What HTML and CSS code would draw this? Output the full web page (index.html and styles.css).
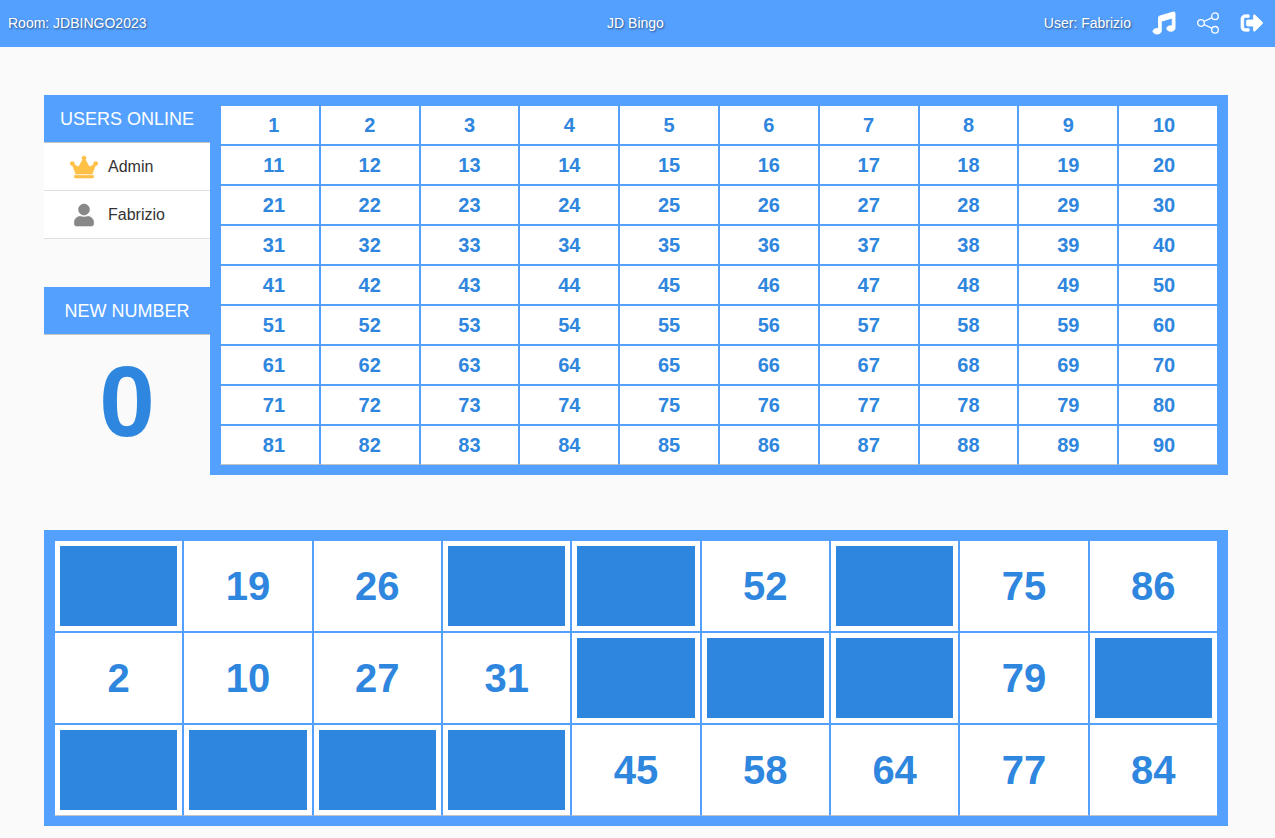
FILE: index.html
```html
<!DOCTYPE html>
<html lang="en">
<head>
<meta charset="utf-8">
<meta name="viewport" content="width=device-width, initial-scale=1">
<title>JD Bingo</title>
<link rel="stylesheet" href="styles.css">
</head>
<body>
<header class="topbar">
  <span class="topbar-room">Room: JDBINGO2023</span>
  <h1 class="topbar-title">JD Bingo</h1>
  <div class="topbar-actions">
    <span>User: Fabrizio</span>
    <button class="icon-button" type="button" aria-label="Music">
      <svg viewBox="0 0 512 512" fill="currentColor" stroke="currentColor" stroke-width="22" overflow="visible"><path d="M470.38 1.51L150.41 96A32 32 0 0 0 128 126.51v261.41A139 139 0 0 0 96 384c-53 0-96 28.66-96 64s43 64 96 64 96-28.66 96-64V214.32l256-75v184.61a138.4 138.4 0 0 0-32-3.93c-53 0-96 28.66-96 64s43 64 96 64 96-28.65 96-64V32a32 32 0 0 0-41.62-30.49z"/></svg>
    </button>
    <button class="icon-button" type="button" aria-label="Share">
      <svg viewBox="0 0 22 22" fill="none" stroke="currentColor" stroke-width="1.3"><circle cx="4" cy="11" r="3.3"/><circle cx="18" cy="4.2" r="3.3"/><circle cx="18" cy="17.800" r="3.3"/><path d="M7 9.500l8-3.900M7 12.500l8 3.900"/></svg>
    </button>
    <button class="icon-button" type="button" aria-label="Leave room">
      <svg viewBox="0 0 512 512" fill="currentColor" stroke="currentColor" stroke-width="16" overflow="visible"><path d="M497 273L329 441c-15 15-41 4.500-41-17v-96H152c-13.300 0-24-10.700-24-24v-96c0-13.300 10.700-24 24-24h136V88c0-21.400 25.900-32 41-17l168 168c9.300 9.400 9.300 24.600 0 34zM192 436v-40c0-6.600-5.400-12-12-12H96c-17.700 0-32-14.300-32-32V160c0-17.700 14.300-32 32-32h84c6.600 0 12-5.400 12-12V76c0-6.600-5.400-12-12-12H96c-53 0-96 43-96 96v192c0 53 43 96 96 96h84c6.600 0 12-5.400 12-12z"/></svg>
    </button>
  </div>
</header>
<main class="game">
  <div class="overview">
    <aside class="sidebar">
      <section>
        <h2 class="panel-title">USERS ONLINE</h2>
        <ul class="users">
          <li class="user">
            <svg class="user-icon user-icon-admin" viewBox="0 0 640 512" fill="currentColor" stroke="currentColor" stroke-width="14" overflow="visible"><path d="M528 448H112c-8.800 0-16 7.200-16 16v32c0 8.800 7.200 16 16 16h416c8.800 0 16-7.200 16-16v-32c0-8.800-7.200-16-16-16zm64-320c-26.500 0-48 21.500-48 48 0 7.100 1.600 13.700 4.400 19.800L476 239.200c-15.400 9.200-35.300 4-44.200-11.600L350.300 85C361 76.200 368 63 368 48c0-26.500-21.500-48-48-48s-48 21.500-48 48c0 15 7 28.200 17.700 37l-81.500 142.600c-8.900 15.600-28.900 20.800-44.200 11.600l-72.300-43.400c2.700-6 4.400-12.700 4.400-19.800 0-26.500-21.500-48-48-48S0 149.500 0 176s21.500 48 48 48c2.600 0 5.200-.4 7.700-.8L128 416h384l72.300-192.800c2.500.4 5.100.8 7.700.8 26.500 0 48-21.500 48-48s-21.500-48-48-48z"/></svg>
            <span>Admin</span>
          </li>
          <li class="user">
            <svg class="user-icon" viewBox="0 0 448 512" fill="currentColor" stroke="currentColor" stroke-width="14" overflow="visible"><path d="M224 256c70.700 0 128-57.300 128-128S294.700 0 224 0 96 57.300 96 128s57.300 128 128 128zm89.600 32h-16.700c-22.200 10.200-46.900 16-72.900 16s-50.600-5.800-72.900-16h-16.700C60.200 288 0 348.200 0 422.400V464c0 26.500 21.500 48 48 48h352c26.500 0 48-21.500 48-48v-41.600c0-74.200-60.200-134.400-134.400-134.400z"/></svg>
            <span>Fabrizio</span>
          </li>
        </ul>
      </section>
      <section>
        <h2 class="panel-title">NEW NUMBER</h2>
        <p class="drawn-number">0</p>
      </section>
    </aside>
    <div class="frame board-frame">
      <table class="grid board" aria-label="Board">
        <tbody>
          <tr><td>1</td><td>2</td><td>3</td><td>4</td><td>5</td><td>6</td><td>7</td><td>8</td><td>9</td><td>10</td></tr>
          <tr><td>11</td><td>12</td><td>13</td><td>14</td><td>15</td><td>16</td><td>17</td><td>18</td><td>19</td><td>20</td></tr>
          <tr><td>21</td><td>22</td><td>23</td><td>24</td><td>25</td><td>26</td><td>27</td><td>28</td><td>29</td><td>30</td></tr>
          <tr><td>31</td><td>32</td><td>33</td><td>34</td><td>35</td><td>36</td><td>37</td><td>38</td><td>39</td><td>40</td></tr>
          <tr><td>41</td><td>42</td><td>43</td><td>44</td><td>45</td><td>46</td><td>47</td><td>48</td><td>49</td><td>50</td></tr>
          <tr><td>51</td><td>52</td><td>53</td><td>54</td><td>55</td><td>56</td><td>57</td><td>58</td><td>59</td><td>60</td></tr>
          <tr><td>61</td><td>62</td><td>63</td><td>64</td><td>65</td><td>66</td><td>67</td><td>68</td><td>69</td><td>70</td></tr>
          <tr><td>71</td><td>72</td><td>73</td><td>74</td><td>75</td><td>76</td><td>77</td><td>78</td><td>79</td><td>80</td></tr>
          <tr><td>81</td><td>82</td><td>83</td><td>84</td><td>85</td><td>86</td><td>87</td><td>88</td><td>89</td><td>90</td></tr>
        </tbody>
      </table>
    </div>
  </div>
  <div class="frame">
    <table class="grid card" aria-label="Your card">
      <tbody>
        <tr><td class="blank"></td><td>19</td><td>26</td><td class="blank"></td><td class="blank"></td><td>52</td><td class="blank"></td><td>75</td><td>86</td></tr>
        <tr><td>2</td><td>10</td><td>27</td><td>31</td><td class="blank"></td><td class="blank"></td><td class="blank"></td><td>79</td><td class="blank"></td></tr>
        <tr><td class="blank"></td><td class="blank"></td><td class="blank"></td><td class="blank"></td><td>45</td><td>58</td><td>64</td><td>77</td><td>84</td></tr>
      </tbody>
    </table>
  </div>
</main>
</body>
</html>
```

FILE: styles.css
```css
:root {
  --blue: #54a0ff;
  --deep-blue: #2e86de;
  --line: #c4c4c4;
}

* {
  box-sizing: border-box;
}

body {
  margin: 0;
  background: #fafafa;
  color: #333;
  font-family: "Liberation Sans", Arial, sans-serif;
  font-size: 16px;
}

.topbar {
  display: grid;
  grid-template-columns: 1fr auto 1fr;
  align-items: center;
  min-height: 47px;
  padding: 0 12px 2px 8px;
  background: var(--blue);
  color: #fff;
  font-size: 14px;
  text-shadow: 1px 1px 2px rgba(0, 0, 0, 0.5);
}

.topbar-title {
  margin: 0;
  font-size: 14px;
  font-weight: 400;
}

.topbar-actions {
  display: flex;
  justify-content: flex-end;
  align-items: center;
  gap: 22px;
}

.icon-button {
  display: flex;
  padding: 0;
  border: 0;
  background: none;
  color: #fff;
  cursor: pointer;
}

.icon-button svg {
  width: 22px;
  height: 22px;
}

.game {
  display: flex;
  flex-direction: column;
  gap: 55px;
  padding: 48px 47px 12px 44px;
}

.overview {
  display: flex;
}

.sidebar {
  display: flex;
  flex-direction: column;
  flex: 0 0 166px;
  gap: 48px;
}

.panel-title {
  margin: 0;
  padding-top: 2px;
  border-bottom: 1px solid var(--line);
  background: var(--blue);
  color: #fff;
  font-size: 18px;
  font-weight: 400;
  line-height: 45px;
  text-align: center;
}

.users {
  margin: 0;
  padding: 0;
  list-style: none;
}

.user {
  display: flex;
  align-items: center;
  gap: 10px;
  height: 48px;
  padding-left: 26px;
  border-bottom: 1px solid #e0e0e0;
  background: #fff;
}

.user-icon {
  width: 28px;
  height: 22px;
  color: #888;
}

.user-icon-admin {
  color: #ffc048;
}

.drawn-number {
  margin: 0;
  color: var(--deep-blue);
  font-size: 100px;
  font-weight: 700;
  line-height: 132px;
  text-align: center;
}

.frame {
  border: 10px solid var(--blue);
}

.board-frame {
  flex: 1;
}

.grid {
  width: 100%;
  border-collapse: separate;
  border-spacing: 0;
  table-layout: fixed;
  background: #fff;
  color: var(--deep-blue);
  font-weight: 700;
  text-align: center;
}

.grid td {
  padding: 0;
  border: 1px solid var(--blue);
}

.grid tr:last-child td {
  border-bottom-color: var(--line);
}

.board {
  font-size: 20px;
}

.board td {
  height: 40px;
}

.board td:first-child {
  padding-left: 8px;
}

.board td:last-child {
  padding-right: 8px;
}

.card {
  font-size: 40px;
}

.card td {
  height: 92px;
}

.card .blank {
  padding: 5px;
  background: var(--deep-blue) content-box;
}

.card .blank::before {
  content: "";
  display: block;
  height: 80px;
}
```
